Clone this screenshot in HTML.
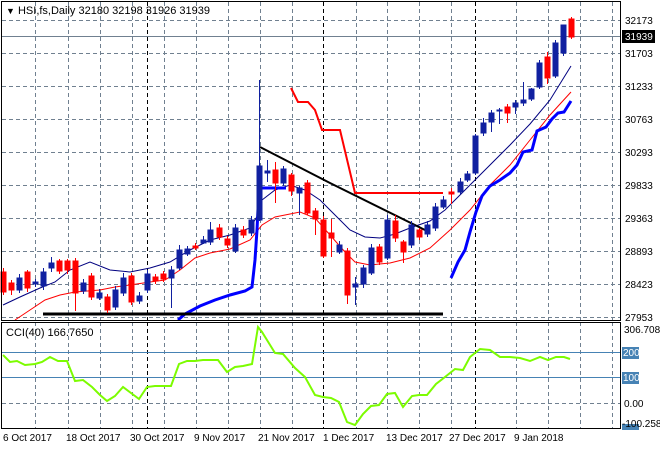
<!DOCTYPE html>
<html><head><meta charset="utf-8"><style>
html,body{margin:0;padding:0;background:#fff;}
svg{display:block;font-family:"Liberation Sans",sans-serif;}
</style></head><body>
<svg width="660" height="450" viewBox="0 0 660 450" xmlns="http://www.w3.org/2000/svg">
<rect width="660" height="450" fill="#fff"/>
<g stroke="#708090" stroke-width="1" stroke-dasharray="4,3" fill="none">
<path d="M2 20.5H620M2 53.5H620M2 86.5H620M2 119.5H620M2 152.5H620M2 185.5H620M2 218.5H620M2 251.5H620M2 284.5H620M2 317.5H620"/>
<path d="M35.5 2V320M68.5 2V320M100.5 2V320M132.5 2V320M164.5 2V320M196.5 2V320M228.5 2V320M260.5 2V320M292.5 2V320M356.5 2V320M387.5 2V320M419.5 2V320M451.5 2V320M516.5 2V320M548.5 2V320M580.5 2V320M612.5 2V320"/>
<path d="M35.5 322V428M68.5 322V428M100.5 322V428M132.5 322V428M164.5 322V428M196.5 322V428M228.5 322V428M260.5 322V428M292.5 322V428M356.5 322V428M387.5 322V428M419.5 322V428M451.5 322V428M516.5 322V428M548.5 322V428M580.5 322V428M612.5 322V428M2 403.5H620"/>
</g>
<g stroke="#000" stroke-width="1" stroke-dasharray="4,3">
<path d="M147.5 2V320M323.5 2V320M475.5 2V320M147.5 322V428M323.5 322V428M475.5 322V428"/>
</g>
<path d="M2 36.5H620" stroke="#708090" stroke-width="1"/>
<polyline fill="none" stroke="#000080" stroke-width="1" points="3,305 20,297 40,288 55,282 70,270 90,262 110,270 130,272 150,268 170,262 190,250 210,240 230,235 250,228 258,215 262,200 275,190 290,185 305,190 320,200 335,215 350,230 365,237 380,238 395,234 410,228 430,221 445,210 460,195 475,180 490,165 510,145 530,124 550,100 571,66"/>
<polyline fill="none" stroke="#ff0000" stroke-width="1" points="15,320 30,310 45,300 60,295 75,292 100,290 115,287 130,285 150,282 165,280 180,270 195,258 210,253 230,249 250,240 262,225 275,217 300,212 315,218 330,235 345,252 355,262 370,265 390,263 410,258 430,248 450,230 470,210 490,185 510,165 530,140 550,115 571,92"/>
<polyline fill="none" stroke="#0000ff" stroke-width="3" points="178,320 185,314 200,306 215,300 230,295 245,291 252,287 255,260 257,230 259,188 286,188"/>
<polyline fill="none" stroke="#0000ff" stroke-width="3" points="451,278 458,262 465,250 470,232 476,212 482,196 490,186 500,180 510,173 517,165 523,152 532,150 537,131 546,127 552,119 558,113 564,112 571,101"/>
<polyline fill="none" stroke="#ff0000" stroke-width="2" points="291,88 298,102 308,102 315,110 322,130 340,130 355,193 443,193"/>
<polyline fill="none" stroke="#000" stroke-width="2" points="260,147 330,183 425,230"/>
<path d="M43 314H443" stroke="#000" stroke-width="3"/>
<g stroke="#1020a0" fill="#1020a0">
<path d="M19.5 274V293M35.5 279V287M43.5 268V290M51.5 257V272M83.5 279V294M99.5 289V300M115.5 286V310M123.5 273V296M139.5 292V304M147.5 270V293M171.5 266V308M179.5 245V270M187.5 246V256M203.5 236V244M210.5 222V245M235.5 224V253M251.5 216V236M259.5 80V221M267.5 160V182M283.5 166V186M299.5 186V215M339.5 241V254M355.5 277V305M363.5 265V288M371.5 244V275M387.5 215V260M411.5 221V248M427.5 221V237M435.5 203V231M443.5 196V209M460.5 178V194M467.5 171V182M475.5 134V175M483.5 118V136M491.5 110V132M499.5 108V124M515.5 100V114M523.5 82V106M531.5 88V101M539.5 60V89M555.5 40V78M563.5 31V56" fill="none"/>
<rect x="17" y="278" width="5" height="12"/><rect x="33" y="282" width="5" height="2"/><rect x="41" y="272" width="5" height="14"/><rect x="49" y="263" width="5" height="5"/><rect x="81" y="283" width="5" height="8"/><rect x="97" y="293" width="5" height="5"/><rect x="113" y="290" width="5" height="17"/><rect x="121" y="278" width="5" height="15"/><rect x="137" y="296" width="5" height="5"/><rect x="145" y="274" width="5" height="16"/><rect x="169" y="270" width="5" height="8"/><rect x="177" y="250" width="5" height="18"/><rect x="185" y="249" width="5" height="5"/><rect x="201" y="240" width="5" height="3"/><rect x="208" y="230" width="5" height="12"/><rect x="233" y="228" width="5" height="23"/><rect x="249" y="220" width="5" height="13"/><rect x="257" y="166" width="5" height="54"/><rect x="265" y="171" width="5" height="2"/><rect x="281" y="169" width="5" height="14"/><rect x="297" y="188" width="5" height="5"/><rect x="337" y="245" width="5" height="7"/><rect x="353" y="284" width="5" height="3"/><rect x="361" y="268" width="5" height="16"/><rect x="369" y="248" width="5" height="25"/><rect x="385" y="220" width="5" height="38"/><rect x="409" y="225" width="5" height="20"/><rect x="425" y="225" width="5" height="9"/><rect x="433" y="207" width="5" height="21"/><rect x="441" y="200" width="5" height="7"/><rect x="458" y="182" width="5" height="10"/><rect x="465" y="174" width="5" height="6"/><rect x="473" y="136" width="5" height="37"/><rect x="481" y="123" width="5" height="10"/><rect x="489" y="113" width="5" height="9"/><rect x="497" y="110" width="5" height="1"/><rect x="513" y="103" width="5" height="4"/><rect x="521" y="100" width="5" height="3"/><rect x="529" y="89" width="5" height="10"/><rect x="537" y="63" width="5" height="24"/><rect x="553" y="43" width="5" height="33"/><rect x="561" y="25" width="5" height="28"/>
</g>
<g stroke="#ff0000" fill="#ff0000">
<path d="M3.5 268V295M11.5 280V295M27.5 270V292M59.5 259V274M67.5 259V274M75.5 258V311M91.5 273V300M107.5 294V313M131.5 273V305M155.5 274V284M163.5 271V282M195.5 243V250M219.5 224V240M227.5 236V248M243.5 226V238M275.5 162V203M291.5 173V196M307.5 180V215M315.5 208V235M323.5 216V258M331.5 219V257M347.5 248V304M379.5 244V265M395.5 215V242M403.5 240V263M419.5 228V240M451.5 188V204M507.5 104V123M547.5 52V84M571.5 17V39" fill="none"/>
<rect x="1" y="272" width="5" height="20"/><rect x="9" y="283" width="5" height="7"/><rect x="25" y="272" width="5" height="16"/><rect x="57" y="261" width="5" height="10"/><rect x="65" y="261" width="5" height="9"/><rect x="73" y="261" width="5" height="32"/><rect x="89" y="276" width="5" height="21"/><rect x="105" y="297" width="5" height="13"/><rect x="129" y="276" width="5" height="26"/><rect x="153" y="277" width="5" height="4"/><rect x="161" y="274" width="5" height="5"/><rect x="193" y="246" width="5" height="2"/><rect x="217" y="228" width="5" height="9"/><rect x="225" y="239" width="5" height="6"/><rect x="241" y="230" width="5" height="5"/><rect x="273" y="170" width="5" height="13"/><rect x="289" y="175" width="5" height="16"/><rect x="305" y="183" width="5" height="30"/><rect x="313" y="211" width="5" height="8"/><rect x="321" y="220" width="5" height="36"/><rect x="329" y="233" width="5" height="5"/><rect x="345" y="251" width="5" height="44"/><rect x="377" y="247" width="5" height="15"/><rect x="393" y="221" width="5" height="17"/><rect x="401" y="242" width="5" height="10"/><rect x="417" y="230" width="5" height="7"/><rect x="449" y="192" width="5" height="2"/><rect x="505" y="107" width="5" height="6"/><rect x="545" y="57" width="5" height="21"/><rect x="569" y="19" width="5" height="18"/>
</g>
<path d="M2 352.5H620M2 377.5H620" stroke="#4682b4" stroke-width="1"/>
<polyline fill="none" stroke="#7cfc00" stroke-width="2" points="3,355 10,362 17,361 25,365 35,364 42,362 50,357 58,361 67,361 75,381 83,380 92,387 100,395 107,401 115,396 123,387 131,393 139,399 147,387 155,386 163,386 171,386 179,364 187,361 195,361 203,360 218,360 227,372 235,367 243,366 252,364 258,327 262,332 275,353 283,354 295,368 305,377 315,395 323,397 331,398 339,402 347,422 355,425 363,414 371,406 379,405 387,394 395,393 403,407 412,396 419,395 427,395 436,384 445,377 455,369 463,370 470,357 480,349 490,350 500,357 510,357 520,358 530,361 540,357 548,360 556,357 564,357 570,359"/>
<rect x="1.5" y="1.5" width="619" height="319" fill="none" stroke="#000"/>
<rect x="1.5" y="322.5" width="619" height="106" fill="none" stroke="#000"/>
<g font-size="11" fill="#000">
<text x="6" y="14"><tspan font-size="9">▼</tspan> HSI,fs,Daily  32180 32198 31926 31939</text>
<text x="6" y="336">CCI(40) 166.7650</text>
</g>
<g font-size="10" fill="#000">
<text x="625" y="24">32173</text>
<text x="625" y="57">31703</text>
<text x="625" y="90">31233</text>
<text x="625" y="123">30763</text>
<text x="625" y="156">30293</text>
<text x="625" y="189">29833</text>
<text x="625" y="222">29363</text>
<text x="625" y="255">28893</text>
<text x="625" y="288">28423</text>
<text x="625" y="321">27953</text>
<text x="624" y="333">306.7083</text>
<text x="624" y="407">0.00</text>
<text x="3" y="441">6 Oct 2017</text>
<text x="66" y="441">18 Oct 2017</text>
<text x="130" y="441">30 Oct 2017</text>
<text x="194" y="441">9 Nov 2017</text>
<text x="258" y="441">21 Nov 2017</text>
<text x="323" y="441">1 Dec 2017</text>
<text x="386" y="441">13 Dec 2017</text>
<text x="449" y="441">27 Dec 2017</text>
<text x="514" y="441">9 Jan 2018</text>
</g>
<rect x="622" y="30" width="33" height="13" fill="#000"/>
<text x="625" y="40" font-size="10" fill="#fff">31939</text>
<rect x="622" y="347" width="17" height="12" fill="#4682b4"/>
<text x="623" y="356" font-size="10" fill="#fff">200</text>
<rect x="622" y="372" width="17" height="12" fill="#4682b4"/>
<text x="623" y="381" font-size="10" fill="#fff">100</text>
<rect x="622" y="424" width="17" height="6" fill="#4682b4"/>
<text x="622" y="427" font-size="10" fill="#000">-100.258</text>
</svg>
</body></html>
